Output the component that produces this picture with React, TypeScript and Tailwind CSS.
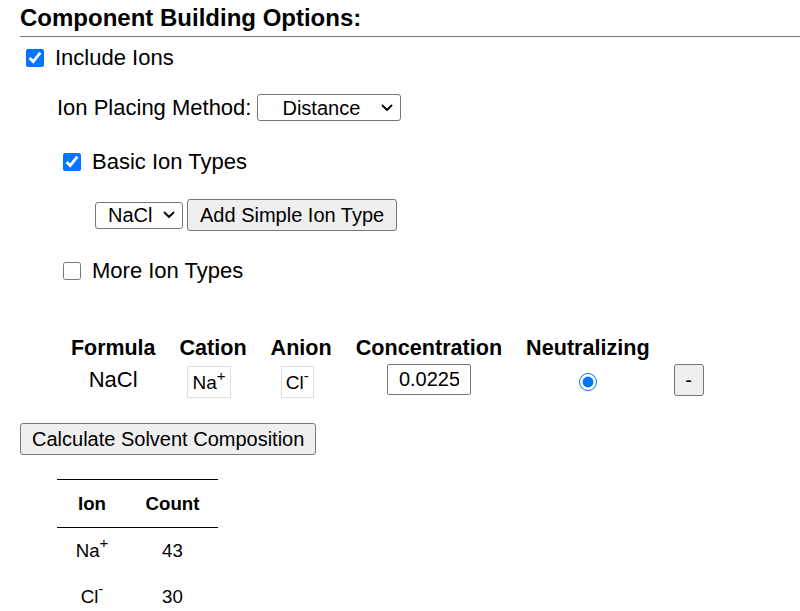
import React from "react";

function Chevron() {
  return (
    <svg width="12" height="8" viewBox="0 0 12 8" className="shrink-0">
      <path d="M1.5 1.5 L6 6 L10.5 1.5" fill="none" stroke="#000" strokeWidth="1.8" strokeLinecap="round" strokeLinejoin="round" />
    </svg>
  );
}

function Check({ checked }: { checked: boolean }) {
  return (
    <input
      type="checkbox"
      defaultChecked={checked}
      className="w-[18px] h-[18px] m-0 shrink-0"
    />
  );
}

export default function App() {
  return (
    <div
      className="w-[800px] h-[611px] overflow-hidden bg-white text-black"
      style={{ fontFamily: '"Liberation Sans", Arial, sans-serif' }}
    >
      <div className="pl-[20px]">
        <h3 className="text-[24px] font-bold leading-[28px] pt-[4px] pb-[4px]">Component Building Options:</h3>
        <div className="h-px bg-[#777] w-[780px]" />

        <div className="flex items-center h-[24px] mt-[9px] pl-[6px] gap-[11px]">
          <Check checked />
          <span className="text-[22px] leading-[24px]">Include Ions</span>
        </div>

        <div className="flex items-center mt-[24px] pl-[37px] h-[27px]">
          <span className="text-[22px] leading-[24px] mr-[6px]">Ion Placing Method:</span>
          <div className="flex items-center justify-between w-[144px] h-[27px] border border-[#767676] rounded-[3px] pl-[24px] pr-[7px] text-[20px]">
            <span>Distance</span>
            <Chevron />
          </div>
        </div>

        <div className="flex items-center h-[24px] mt-[29px] pl-[43px] gap-[11px]">
          <Check checked />
          <span className="text-[22px] leading-[24px]">Basic Ion Types</span>
        </div>

        <div className="flex items-center mt-[25px] pl-[75px] h-[32px]">
          <div className="flex items-center justify-between w-[88px] h-[27px] border border-[#767676] rounded-[3px] pl-[12px] pr-[7px] text-[20px]">
            <span>NaCl</span>
            <Chevron />
          </div>
          <button className="ml-[4px] h-[32px] px-[12px] bg-[#efefef] border border-[#767676] rounded-[3px] text-[20px] leading-[24px]">
            Add Simple Ion Type
          </button>
        </div>

        <div className="flex items-center h-[24px] mt-[28px] pl-[43px] gap-[11px]">
          <Check checked={false} />
          <span className="text-[22px] leading-[24px]">More Ion Types</span>
        </div>

        <table className="ml-[39px] mt-[51px] border-collapse">
          <thead>
            <tr className="h-[30px]">
              <th className="px-[12px] text-[21.4px] font-bold leading-[28px] text-center align-top">Formula</th>
              <th className="px-[12px] text-[21.6px] font-bold leading-[28px] text-center align-top">Cation</th>
              <th className="px-[12px] text-[21.6px] font-bold leading-[28px] text-center align-top">Anion</th>
              <th className="px-[12px] text-[21.6px] font-bold leading-[28px] text-center align-top">Concentration</th>
              <th className="px-[12px] text-[21.6px] font-bold leading-[28px] text-center align-top">Neutralizing</th>
              <th className="px-[12px]"></th>
            </tr>
          </thead>
          <tbody>
            <tr className="h-[36px]">
              <td className="px-[12px] text-center text-[22px] leading-[32px] align-top">NaCl</td>
              <td className="px-[12px] align-top">
                <div className="flex justify-center pt-[2px] pr-[8px]">
                  <span className="block border border-[#e0e0d4] h-[32px] px-[4px] text-[19px] leading-[32px]">
                    Na<sup className="text-[15px] top-[-0.55em]">+</sup>
                  </span>
                </div>
              </td>
              <td className="px-[12px] align-top">
                <div className="flex justify-center pt-[2px] pr-[8px]">
                  <span className="block border border-[#e0e0d4] h-[32px] px-[4px] text-[19px] leading-[32px]">
                    Cl<sup className="text-[15px] top-[-0.55em]">-</sup>
                  </span>
                </div>
              </td>
              <td className="px-[12px] align-top">
                <div className="flex justify-center">
                  <input
                    readOnly
                    value="0.0225"
                    className="w-[84px] h-[31px] border border-[#767676] rounded-[2px] px-[11px] text-[20px] leading-[24px] text-left"
                  />
                </div>
              </td>
              <td className="px-[12px] align-top">
                <div className="flex justify-center pt-[9px]">
                  <input type="radio" defaultChecked className="w-[18px] h-[18px] m-0" />
                </div>
              </td>
              <td className="px-[12px] align-top">
                <button className="w-[30px] h-[32px] bg-[#efefef] border border-[#767676] rounded-[3px] text-[20px] leading-[24px]">
                  -
                </button>
              </td>
            </tr>
          </tbody>
        </table>

        <button className="mt-[23px] h-[32px] px-[11px] bg-[#efefef] border border-[#767676] rounded-[3px] text-[20px] leading-[24px]">
          Calculate Solvent Composition
        </button>

        <table className="ml-[37px] mt-[24px] border-collapse text-[18.67px]">
          <thead>
            <tr className="h-[48px] border-t border-b border-black">
              <th className="w-[70px] text-center font-bold">Ion</th>
              <th className="w-[91px] text-center font-bold">Count</th>
            </tr>
          </thead>
          <tbody>
            <tr className="h-[46px]">
              <td className="text-center">
                Na<sup className="text-[15px] top-[-0.6em]">+</sup>
              </td>
              <td className="text-center">43</td>
            </tr>
            <tr className="h-[46px]">
              <td className="text-center">
                Cl<sup className="text-[15px] top-[-0.6em]">-</sup>
              </td>
              <td className="text-center">30</td>
            </tr>
          </tbody>
        </table>
      </div>
    </div>
  );
}
